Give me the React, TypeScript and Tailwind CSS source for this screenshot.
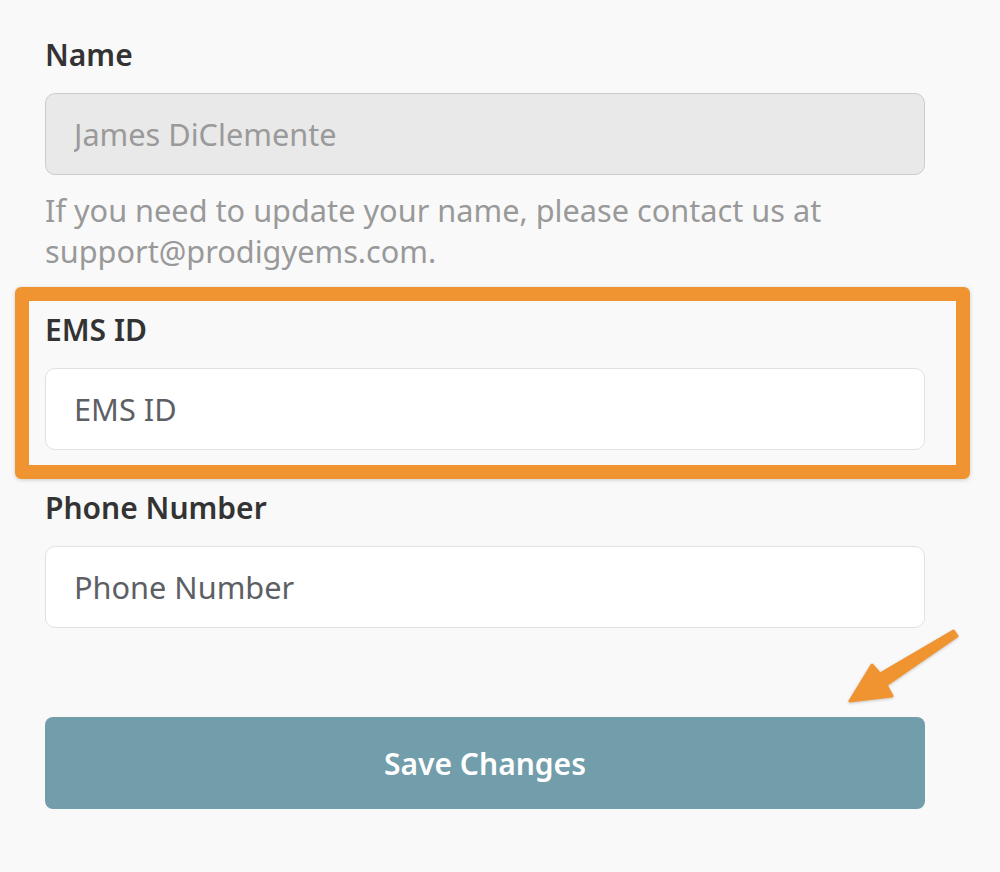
import React from "react";

export default function App() {
  return (
    <div className="relative w-[1000px] min-h-[872px] bg-[#f9f9f9] pl-[45px] pt-[32px] font-['Noto_Sans',sans-serif]">
      <div className="w-[880px]">
        <label className="block text-[30px] leading-[45px] font-semibold text-[#333333]">Name</label>
        <input
          readOnly
          disabled
          value="James DiClemente"
          className="mt-[16px] block h-[82px] w-full rounded-[10px] border border-[#cccccc] bg-[#e9e9e9] px-[28px] text-[30.7px] text-[#9a9a9a] outline-none"
        />
        <p className="mt-[15px] text-[30.7px] leading-[41px] text-[#999999]">
          If you need to update your name, please contact us at support@prodigyems.com.
        </p>

        <div className="relative mt-[35px]">
          <div className="pointer-events-none absolute -left-[30px] -right-[45px] -top-[20px] -bottom-[29px] rounded-[6px] border-[14px] border-[#ef9430] shadow-[0_1px_4px_rgba(0,0,0,0.18)]" />
          <label className="block text-[30px] leading-[45px] font-semibold text-[#333333]">EMS ID</label>
          <input
            placeholder="EMS ID"
            className="mt-[16px] block h-[82px] w-full rounded-[10px] border border-[#dee2e6] bg-white px-[28px] text-[30.7px] text-[#5c6064] placeholder:text-[#5c6064] outline-none"
          />
        </div>

        <div className="mt-[35px]">
          <label className="block text-[30px] leading-[45px] font-semibold text-[#333333]">Phone Number</label>
          <input
            placeholder="Phone Number"
            className="mt-[16px] block h-[82px] w-full rounded-[10px] border border-[#dee2e6] bg-white px-[28px] text-[30.7px] text-[#5c6064] placeholder:text-[#5c6064] outline-none"
          />
        </div>

        <button className="mt-[89px] flex h-[92px] w-full items-center justify-center rounded-[8px] bg-[#729dab] text-[30px] font-semibold text-white">
          Save Changes
        </button>
      </div>

      <svg
        className="absolute left-[840px] top-[620px]"
        width="130"
        height="95"
        viewBox="840 620 130 95"
        style={{ filter: "drop-shadow(0 1px 1.5px rgba(0,0,0,0.2))" }}
      >
        <path
          d="M953.5 631 L880 674 L872 665 L850 701 L892 696 L886 685 L957 636 Z"
          fill="#ef9430"
          stroke="#ef9430"
          strokeWidth="3"
          strokeLinejoin="round"
        />
      </svg>
    </div>
  );
}
